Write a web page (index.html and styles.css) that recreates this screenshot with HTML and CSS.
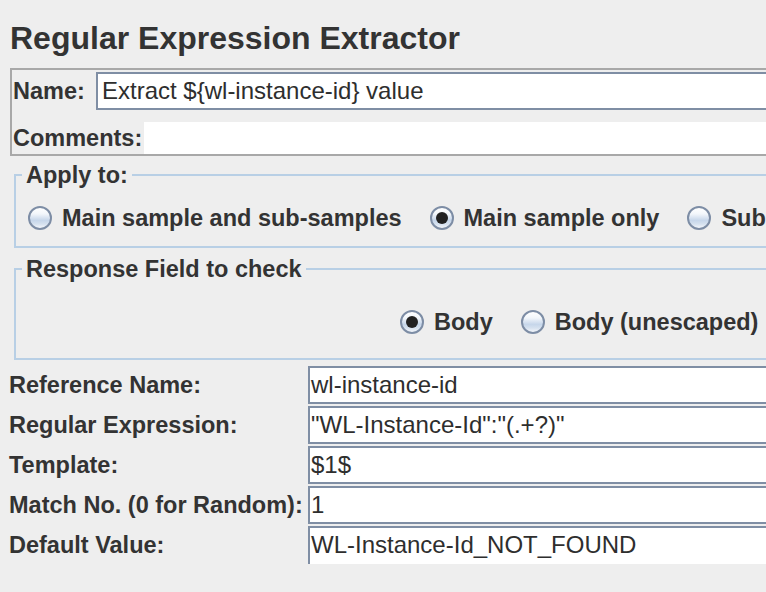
FILE: index.html
```html
<!DOCTYPE html>
<html>
<head>
<meta charset="utf-8">
<title>Regular Expression Extractor</title>
<link rel="stylesheet" href="styles.css">
</head>
<body>
<div class="page">
  <h1 class="title">Regular Expression Extractor</h1>
  <div class="namebox">
    <div class="nrow">
      <span class="lbl name-lbl">Name:</span>
      <div class="tf name-tf">Extract ${wl-instance-id} value</div>
    </div>
    <div class="nrow comments-row">
      <span class="lbl comments-lbl">Comments:</span>
      <div class="comments"></div>
    </div>
  </div>
  <fieldset class="group apply">
    <legend>Apply to:</legend>
    <div class="radios apply-radios">
      <span class="opt"><span class="radio"></span>Main sample and sub-samples</span>
      <span class="opt"><span class="radio on"></span>Main sample only</span>
      <span class="opt"><span class="radio"></span>Sub-samples only</span>
    </div>
  </fieldset>
  <fieldset class="group response">
    <legend>Response Field to check</legend>
    <div class="radios response-radios">
      <span class="opt"><span class="radio on"></span>Body</span>
      <span class="opt"><span class="radio"></span>Body (unescaped)</span>
    </div>
  </fieldset>
  <div class="form">
    <span class="lbl flbl">Reference Name:</span>
    <div class="ff">wl-instance-id</div>
    <span class="lbl flbl">Regular Expression:</span>
    <div class="ff">"WL-Instance-Id":"(.+?)"</div>
    <span class="lbl flbl">Template:</span>
    <div class="ff">$1$</div>
    <span class="lbl flbl">Match No. (0 for Random):</span>
    <div class="ff">1</div>
    <span class="lbl flbl">Default Value:</span>
    <div class="ff last">WL-Instance-Id_NOT_FOUND</div>
  </div>
</div>
</body>
</html>
```

FILE: styles.css
```css
html, body {
  margin: 0;
  padding: 0;
  background: #eeeeee;
  overflow: hidden;
}
body {
  width: 766px;
  height: 592px;
  font-family: "Liberation Sans", Arial, sans-serif;
  color: #333333;
}
.page {
  width: 1200px;
}
.title {
  margin: 20px 0 12px 10px;
  font-size: 32px;
  line-height: 36px;
  font-weight: bold;
  color: #333333;
}
.lbl {
  font-weight: bold;
  font-size: 23.5px;
  line-height: 26px;
  white-space: nowrap;
}
.namebox {
  margin-left: 10px;
  border: 2px solid #a8a8a8;
  border-right: none;
  padding: 2px 0 0 1px;
}
.nrow {
  display: flex;
  align-items: center;
}
.name-lbl {
  width: 83px;
  flex-shrink: 0;
}
.tf {
  flex: 1;
  height: 38px;
  box-sizing: border-box;
  border: 2px solid #7f8ea4;
  border-right: none;
  background: #ffffff;
  padding-left: 4px;
  font-size: 24px;
  line-height: 34px;
  white-space: nowrap;
  color: #2e2e2e;
}
.comments-row {
  margin-top: 12px;
}
.comments-lbl {
  width: 131px;
  flex-shrink: 0;
}
.comments {
  flex: 1;
  height: 32px;
  background: #ffffff;
}
.group {
  margin: 6px 0 0 14px;
  padding: 0;
  border: 2px solid #b8cfe5;
  border-right: none;
  min-width: 0;
}
.group legend {
  margin-left: 6px;
  padding: 0 4px;
  font-weight: bold;
  font-size: 23.5px;
  line-height: 26px;
}
.apply {
  margin-top: 6px;
}
.response {
  margin-top: 8px;
}
.radios {
  display: flex;
  gap: 28px;
}
.apply-radios {
  padding: 17px 0 15px 12px;
}
.response-radios {
  padding: 27px 0 23px 384px;
}
.opt {
  display: flex;
  align-items: center;
  font-weight: bold;
  font-size: 23.5px;
  line-height: 26px;
  white-space: nowrap;
}
.radio {
  width: 24px;
  height: 24px;
  box-sizing: border-box;
  border-radius: 50%;
  border: 2px solid #7d8da5;
  background: linear-gradient(#ffffff 0%, #f2f6fb 30%, #c6d6ea 62%, #d5e1ef 80%, #f4f7fb 100%);
  margin-right: 10px;
  display: inline-flex;
  align-items: center;
  justify-content: center;
  flex-shrink: 0;
}
.radio.on::after {
  content: "";
  width: 12px;
  height: 12px;
  border-radius: 50%;
  background: #222222;
}
.form {
  margin: 6px 0 0 9px;
  display: grid;
  grid-template-columns: 299px 1fr;
  grid-auto-rows: 38px;
  row-gap: 2px;
}
.flbl {
  align-self: center;
}
.ff {
  box-sizing: border-box;
  border: 2px solid #7f8ea4;
  border-right: none;
  background: #ffffff;
  padding-left: 1px;
  font-size: 24px;
  line-height: 34px;
  white-space: nowrap;
  color: #2e2e2e;
}
.ff.last {
  border-bottom: none;
}
```
